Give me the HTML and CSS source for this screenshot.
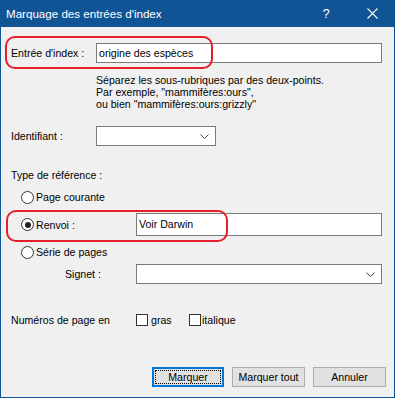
FILE: index.html
```html
<!DOCTYPE html>
<html lang="fr">
<head>
    <meta charset="UTF-8">
    <title>Marquage des entrées d'index</title>
    <link rel="stylesheet" href="styles.css">
</head>
<body>
    <div class="dialog">
        <div class="titlebar">
            <span class="title">Marquage des entrées d'index</span>
            <span class="help">?</span>
            <span class="close">
                <svg width="11" height="11" viewBox="0 0 11 11"><path d="M0.5 0.5 L10.5 10.5 M10.5 0.5 L0.5 10.5" stroke="#fff" stroke-width="1.1" fill="none"/></svg>
            </span>
        </div>
        <div class="content">
            <!-- Entrée -->
            <div class="row entry-row">
                <span class="label">Entrée d'index :</span>
                <div class="textbox">origine des espèces</div>
            </div>
            <div class="hint">
                Séparez les sous-rubriques par des deux-points.<br>
                Par exemple, "mammifères:ours",<br>
                ou bien "mammifères:ours:grizzly"
            </div>
            <div class="row ident-row">
                <span class="label">Identifiant :</span>
                <div class="combo combo-short">
                    <svg class="chevron" width="9" height="5" viewBox="0 0 9 5"><path d="M0.5 0.5 L4.5 4.5 L8.5 0.5" stroke="#444" stroke-width="1" fill="none"/></svg>
                </div>
            </div>

            <!-- Type de référence -->
            <div class="section-label">Type de référence :</div>
            <div class="options">
                <div class="radio-row first">
                    <span class="radio"></span>
                    <span class="radio-text">Page courante</span>
                </div>
                <div class="radio-row renvoi">
                    <span class="radio checked"></span>
                    <span class="radio-text fixed">Renvoi :</span>
                    <div class="textbox">Voir Darwin</div>
                </div>
                <div class="radio-row">
                    <span class="radio"></span>
                    <span class="radio-text">Série de pages</span>
                </div>
                <div class="signet-row">
                    <span class="signet-label">Signet :</span>
                    <div class="combo">
                        <svg class="chevron" width="9" height="5" viewBox="0 0 9 5"><path d="M0.5 0.5 L4.5 4.5 L8.5 0.5" stroke="#444" stroke-width="1" fill="none"/></svg>
                    </div>
                </div>
            </div>

            <!-- Numéros -->
            <div class="row numbers-row">
                <span class="label wide">Numéros de page en</span>
                <span class="check-item"><span class="check"></span>gras</span>
                <span class="check-item"><span class="check"></span>italique</span>
            </div>

            <div class="buttons">
                <button class="btn default">Marquer</button>
                <button class="btn">Marquer tout</button>
                <button class="btn">Annuler</button>
            </div>
        </div>

        <div class="mark mark-entry"></div>
        <div class="mark mark-renvoi"></div>
    </div>
</body>
</html>
```

FILE: styles.css
```css
/* Page */
body {
    margin: 0;
    font-family: 'Liberation Sans', Arial, sans-serif;
    font-size: 10.6px;
    color: #000;
    background: #f0f0f0;
}

/* Fenêtre */
.dialog {
    position: relative;
    width: 395px;
    height: 398px;
    box-sizing: border-box;
    border: 1px solid #115496;
    border-top: none;
    background: #f0f0f0;
}

.titlebar {
    display: flex;
    align-items: center;
    height: 27px;
    margin: 0 -1px;
    background: #115496;
    color: #fff;
}

.title {
    flex: 1;
    padding-left: 6px;
    font-size: 11.6px;
}

.help {
    width: 46px;
    text-align: center;
    font-size: 13px;
}

.close {
    display: flex;
    justify-content: center;
    width: 46px;
}

/* Contenu */
.content {
    padding: 0 12px 0 10px;
}

.row {
    display: flex;
    align-items: center;
}

.label {
    width: 85px;
    flex-shrink: 0;
}

.label.wide {
    width: 125px;
}

.textbox {
    flex: 1;
    height: 20px;
    box-sizing: border-box;
    border: 1px solid #7a7a7a;
    background: #fff;
    padding-left: 2px;
    line-height: 18px;
}

.combo {
    position: relative;
    flex: 1;
    height: 20px;
    box-sizing: border-box;
    border: 1px solid #7a7a7a;
    background: #fff;
}

.combo-short {
    flex: 0 0 120px;
}

.chevron {
    position: absolute;
    right: 6px;
    top: 7px;
}

.entry-row {
    margin-top: 16px;
}

.hint {
    margin: 11px 0 0 85px;
    line-height: 12px;
}

.ident-row {
    margin-top: 16px;
}

.section-label {
    margin-top: 22px;
    line-height: 14px;
}

/* Boutons radio */
.options {
    padding-left: 10px;
}

.radio-row {
    display: flex;
    align-items: center;
    height: 14px;
    margin-top: 9px;
}

.radio-row.first {
    margin-top: 8px;
}

.radio-row.renvoi {
    height: 23px;
}

.renvoi .textbox {
    height: 23px;
    line-height: 21px;
}

.radio {
    position: relative;
    width: 13px;
    height: 13px;
    box-sizing: border-box;
    border: 1px solid #333;
    border-radius: 50%;
    background: #fff;
    margin-right: 2px;
    flex-shrink: 0;
}

.radio.checked::after {
    content: "";
    position: absolute;
    left: 2.5px;
    top: 2.5px;
    width: 6px;
    height: 6px;
    border-radius: 50%;
    background: #222;
}

.radio-text.fixed {
    width: 100px;
    flex-shrink: 0;
}

.signet-row {
    display: flex;
    align-items: center;
    margin-top: 5px;
}

.signet-label {
    width: 71px;
    padding-left: 44px;
    box-sizing: content-box;
    flex-shrink: 0;
}

/* Cases à cocher */
.numbers-row {
    margin-top: 29px;
    height: 14px;
}

.check-item {
    display: flex;
    align-items: center;
    width: 53px;
}

.check {
    width: 12px;
    height: 12px;
    box-sizing: border-box;
    border: 1px solid #333;
    background: #fff;
    margin-right: 3px;
}

.check-item:last-child .check {
    margin-right: 1px;
}

/* Boutons */
.buttons {
    display: flex;
    justify-content: flex-end;
    gap: 8px;
    margin: 40px -4px 0 0;
}

.btn {
    width: 73px;
    height: 20px;
    box-sizing: border-box;
    border: 1px solid #adadad;
    background: #e1e1e1;
    font-family: inherit;
    font-size: 10.6px;
    color: #000;
    padding: 0;
}

.btn.default {
    width: 72px;
    border: 2px solid #0078d7;
    outline: 1px dotted #000;
    outline-offset: -4px;
}

/* Annotations rouges */
.mark {
    position: absolute;
    border: 2px solid #e3202a;
    border-radius: 10px;
    box-sizing: border-box;
}

.mark-entry {
    left: 4px;
    top: 36px;
    width: 208px;
    height: 33px;
}

.mark-renvoi {
    left: 5px;
    top: 210px;
    width: 222px;
    height: 32px;
}
```
